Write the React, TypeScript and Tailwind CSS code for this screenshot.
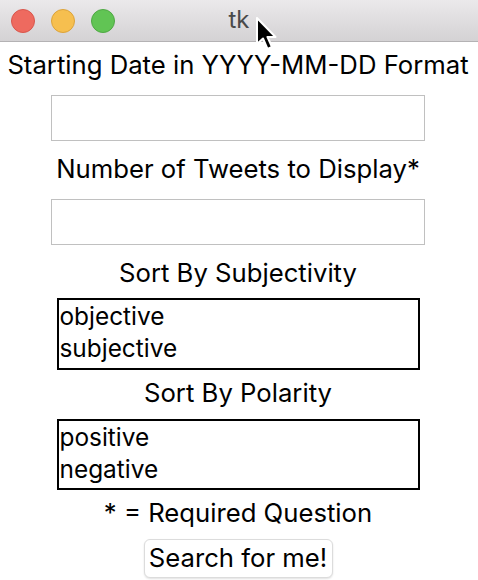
import React from "react";

const font = { fontFamily: "Inter, 'Liberation Sans', sans-serif" };

function Cursor() {
  return (
    <svg
      className="absolute left-[255px] top-[17px]"
      width="24"
      height="34"
      viewBox="0 0 24 34"
    >
      <path
        d="M2 1 L2 27 L8 21.5 L12.5 32 L17 30 L12.5 20 L20.5 20 Z"
        fill="#000"
        stroke="#fff"
        strokeWidth="2"
        strokeLinejoin="round"
      />
    </svg>
  );
}

export default function App() {
  return (
    <div className="relative w-[478px] h-[580px] bg-white overflow-hidden text-black" style={font}>
      <div className="relative flex h-[42px] items-center border-b border-[#b4b2b4] bg-gradient-to-b from-[#ebe9eb] to-[#d4d2d4]">
        <div className="flex gap-[16px] pl-[11px]">
          <div className="h-[24px] w-[24px] rounded-full border border-[#d9564c] bg-[#ee6a5f]" />
          <div className="h-[24px] w-[24px] rounded-full border border-[#dca33a] bg-[#f6bf4f]" />
          <div className="h-[24px] w-[24px] rounded-full border border-[#4fa844] bg-[#61c454]" />
        </div>
        <div className="absolute left-0 right-0 top-0 flex h-[40px] items-center justify-center text-[24px] text-[#4a4a4a]">
          tk
        </div>
      </div>
      <Cursor />
      <div className="flex flex-col items-center pr-[2px] text-[25.7px]">
        <div className="mt-[8px] mb-[15px] leading-[30px] whitespace-nowrap">Starting Date in YYYY-MM-DD Format</div>
        <div className="h-[46px] w-[374px] border border-[#c0c0c0] bg-white" />
        <div className="mt-[13px] mb-[15px] leading-[30px] whitespace-nowrap">Number of Tweets to Display*</div>
        <div className="h-[46px] w-[374px] border border-[#c0c0c0] bg-white" />
        <div className="mt-[13px] mb-[10px] leading-[30px] whitespace-nowrap">Sort By Subjectivity</div>
        <div className="h-[72px] w-[363px] border-2 border-black pl-px text-[24.4px]">
          <div className="leading-[32px]">objective</div>
          <div className="leading-[32px]">subjective</div>
        </div>
        <div className="mt-[8px] mb-[11px] leading-[30px] whitespace-nowrap">Sort By Polarity</div>
        <div className="h-[71px] w-[363px] border-2 border-black pl-px text-[24.4px]">
          <div className="leading-[32px]">positive</div>
          <div className="leading-[32px]">negative</div>
        </div>
        <div className="mt-[8px] mb-[11px] leading-[30px] whitespace-nowrap">* = Required Question</div>
        <div className="flex h-[39px] w-[189px] items-center justify-center rounded-[6px] border border-[#dcdcdc] bg-white shadow-[0_1px_2px_rgba(0,0,0,0.12)]">
          Search for me!
        </div>
      </div>
    </div>
  );
}
